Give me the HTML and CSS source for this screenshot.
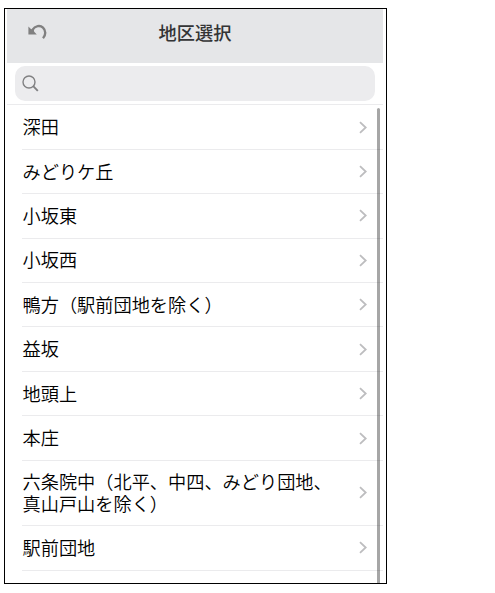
FILE: index.html
```html
<!DOCTYPE html>
<html lang="ja">
<head>
  <meta charset="UTF-8" />
  <meta name="viewport" content="width=device-width, initial-scale=1.0" />
  <title>地区選択</title>
  <link rel="stylesheet" href="styles.css">
</head>
<body>
  <div class="screen">
    <header class="header">
      <button class="back-button" aria-label="戻る">
        <svg width="22" height="18" viewBox="0 0 22 18">
          <path d="M5.5 6.8 C8 2.6 13.2 2 16 4.6 C19 7.4 19 12 16 15.2" fill="none" stroke="#808080" stroke-width="2.4" />
          <path d="M1.4 3.4 L4.2 6.2 L6.6 5.4 L7.2 8.8 L9.8 11.6 H1.4 Z" fill="#808080" />
        </svg>
      </button>
      <h1>地区選択</h1>
    </header>

    <div class="search">
      <div class="search-box">
        <svg width="18" height="18" viewBox="0 0 18 18" fill="none" stroke="#808082">
          <circle cx="7" cy="7" r="6" stroke-width="1.4" />
          <path d="M11.2 11.2 L15.8 15.8" stroke-width="1.9" />
        </svg>
      </div>
    </div>

    <div class="list-area">
      <ul class="list" id="areaList"></ul>
      <div class="scrollbar"></div>
    </div>
  </div>

  <script>
    const areas = [
      '深田',
      'みどりケ丘',
      '小坂東',
      '小坂西',
      '鴨方（駅前団地を除く）',
      '益坂',
      '地頭上',
      '本庄',
      '六条院中（北平、中四、みどり団地、<br>真山戸山を除く）',
      '駅前団地'
    ];

    const list = document.getElementById('areaList');
    areas.forEach(name => {
      list.innerHTML += `<li class="item">
        <span class="name">${name}</span>
        <svg class="chevron" width="8" height="13" viewBox="0 0 8 13">
          <path d="M1 1.2 L6.7 6.5 L1 11.8" fill="none" stroke="#bdbdbf" stroke-width="1.8" />
        </svg>
      </li>`;
    });
  </script>
</body>
</html>
```
FILE: styles.css
```css
html, body {
  margin: 0;
  padding: 0;
  background: #fff;
  font-family: "Noto Sans CJK JP", sans-serif;
  color: #000;
}
* {
  box-sizing: border-box;
}
.screen {
  display: flex;
  flex-direction: column;
  width: 383px;
  height: 576px;
  margin: 8px 0 0 4px;
  padding: 0 3px 0 2px;
  border: 1px solid #000;
  overflow: hidden;
}
.header {
  display: grid;
  grid-template-columns: 60px 1fr 60px;
  align-items: center;
  flex: none;
  height: 54px;
  padding-bottom: 8px;
  background: #e5e6e8;
}
.header h1 {
  margin: 0;
  font-size: 18.2px;
  line-height: 24px;
  font-weight: 500;
  text-align: center;
  color: #333435;
}
.back-button {
  display: flex;
  margin: 0 0 0 20px;
  padding: 0;
  border: none;
  background: none;
}
.search {
  flex: none;
  height: 42px;
  padding: 3px 8px 0;
  border-bottom: 1px solid #ebebed;
}
.search-box {
  display: flex;
  align-items: center;
  height: 35px;
  padding-left: 7px;
  background: #ececee;
  border-radius: 10px;
}
.list-area {
  position: relative;
  flex: 1;
  min-height: 0;
}
.list {
  margin: 0;
  padding: 0.3px 0 0 15px;
  list-style: none;
}
.item {
  display: flex;
  align-items: center;
  justify-content: space-between;
  min-height: 44.45px;
  padding: 10.4px 16px 10.4px 0.5px;
  border-bottom: 1px solid #ebebed;
}
.name {
  font-size: 18.2px;
  line-height: 21.8px;
  font-weight: 350;
  white-space: nowrap;
}
.chevron {
  flex: none;
}
/* Scroll indicator over the list */
.scrollbar {
  position: absolute;
  top: 3px;
  right: 3px;
  bottom: 0;
  width: 3px;
  background: rgba(0, 0, 0, 0.35);
  border-radius: 2px 2px 0 0;
}
```
